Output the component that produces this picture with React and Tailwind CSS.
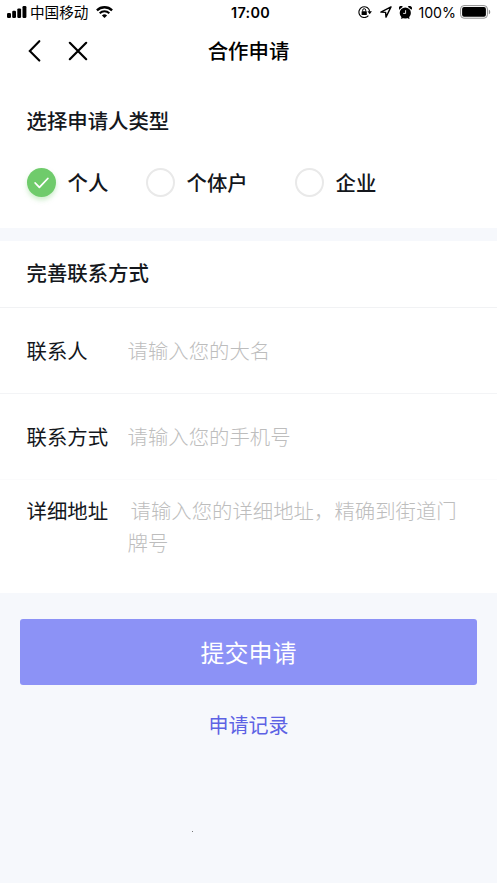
import { useState } from 'react';

const TYPES = [
  { id: 'person', label: '个人', width: 'w-[119px]' },
  { id: 'household', label: '个体户', width: 'w-[149px]' },
  { id: 'company', label: '企业', width: 'w-[100px]' },
];

function SignalIcon() {
  return (
    <svg width="20" height="12" viewBox="0 0 20 12" fill="#000">
      <rect x="0" y="7" width="4" height="5" rx="1.2" />
      <rect x="5.2" y="4.8" width="3.8" height="7.2" rx="1.2" />
      <rect x="10.3" y="2.4" width="3.8" height="9.6" rx="1.2" />
      <rect x="15.5" y="0" width="3.9" height="12" rx="1.2" />
    </svg>
  );
}

function WifiIcon() {
  return (
    <svg width="17" height="12" viewBox="0 0 17 12" fill="none" stroke="#000">
      <path d="M.9 4.3a11 11 0 0 1 15.2 0" strokeWidth="2.3" />
      <path d="M3.7 7.2a7 7 0 0 1 9.6 0" strokeWidth="2.1" />
      <path d="M8.5 12 5.9 9.4a3.8 3.8 0 0 1 5.2 0z" fill="#000" stroke="none" />
    </svg>
  );
}

function LockRotationIcon() {
  return (
    <svg width="14" height="12" viewBox="0 0 14 12" fill="none" stroke="#000">
      <path d="M10.4 9.7A5.4 5.4 0 1 1 11.7 5.6" strokeWidth="1.1" />
      <path d="M9.4 5.3h4.5l-2.2 2.9z" fill="#000" stroke="none" />
      <rect x="3.6" y="5.2" width="5.2" height="3.9" rx=".4" fill="#000" stroke="none" />
      <path d="M4.7 5.5V4.2a1.5 1.5 0 0 1 3 0v1.3" strokeWidth="1" />
    </svg>
  );
}

function LocationIcon() {
  return (
    <svg width="12" height="12" viewBox="0 0 12 12" fill="none" stroke="#000" strokeWidth="1.4" strokeLinejoin="round">
      <path d="M11 .9 .9 6.1l4.7.3.4 4.7z" />
    </svg>
  );
}

function AlarmIcon() {
  return (
    <svg width="13" height="13" viewBox="0 0 13 13">
      <circle cx="6.3" cy="7" r="5.6" />
      <path d="M.2 3.8A2.3 2.3 0 0 1 3.8.8zM12.4 3.8A2.3 2.3 0 0 0 8.8.8zM1.8 12.4l1.2-2 1.4.9-1.2 1.4zM10.8 12.4l-1.2-2-1.4.9 1.2 1.4z" />
      <path d="M6.6 4.2v3.2H4.2" fill="none" stroke="#fff" strokeWidth=".9" />
    </svg>
  );
}

function BatteryIcon() {
  return (
    <svg width="31" height="14" viewBox="0 0 31 14">
      <rect x=".6" y=".6" width="26.8" height="12.6" rx="3.4" fill="none" stroke="#8f8f8f" strokeWidth="1" />
      <rect x="2.1" y="2.1" width="23.8" height="9.6" rx="1.9" />
      <path d="M28.8 4.7c1.9.5 1.9 4 0 4.5z" fill="#8f8f8f" />
    </svg>
  );
}

function StatusBar() {
  return (
    <div className="grid grid-cols-[1fr_auto_1fr] h-6 items-center pl-[7px] pr-[6px]">
      <div className="flex items-center">
        <SignalIcon />
        <span className="ml-[3px] text-[14.6px] leading-6 whitespace-nowrap">中国移动</span>
        <span className="ml-[8px]"><WifiIcon /></span>
      </div>
      <span className="pt-px pl-[3px] font-[Inter] text-[14.4px] leading-[22px] font-semibold tracking-[0.3px]">17:00</span>
      <div className="flex items-center justify-end">
        <LockRotationIcon />
        <span className="ml-[8px]"><LocationIcon /></span>
        <span className="ml-[7px]"><AlarmIcon /></span>
        <span className="ml-[6px] pt-px font-[Inter] text-[14.2px] leading-[22px]">100%</span>
        <span className="ml-[4px]"><BatteryIcon /></span>
      </div>
    </div>
  );
}

function NavBar() {
  return (
    <div className="grid grid-cols-[1fr_auto_1fr] h-[54px] items-center">
      <div className="flex items-center gap-[27px] pl-[28px]">
        <svg width="13" height="22" viewBox="0 0 13 22" fill="none" stroke="#000" strokeWidth="2.1" strokeLinecap="round">
          <path d="M11.3 1.2 1.8 11l9.5 9.6" />
        </svg>
        <svg width="20" height="20" viewBox="0 0 20 20" fill="none" stroke="#000" strokeWidth="2.2" strokeLinecap="round">
          <path d="m1.8 1.8 16.4 16.4M18.2 1.8 1.8 18.2" />
        </svg>
      </div>
      <h1 className="pb-[2px] text-[20.4px] font-medium">合作申请</h1>
    </div>
  );
}

function Radio({ checked }) {
  if (!checked) {
    return <span className="size-[29px] rounded-full border-2 border-[#e9e9e9] bg-white" />;
  }
  return (
    <span className="flex size-[29px] items-center justify-center rounded-full bg-[#6fcb6b] shadow-[0_3px_5px_rgba(111,203,107,0.35)]">
      <svg width="15" height="12" viewBox="0 0 15 12" fill="none" stroke="#fff" strokeWidth="1.8" strokeLinecap="round" strokeLinejoin="round">
        <path d="m1.2 6 4.2 4.4L13.8 1.5" />
      </svg>
    </span>
  );
}

function Field({ label, placeholder, last }) {
  return (
    <label className={`flex h-[86px] items-center border-b pl-[26.5px] ${last ? 'border-[#fbfbfc]' : 'border-[#f3f4f6]'}`}>
      <span className="w-[101px]">{label}</span>
      <input className="flex-1 font-light outline-none placeholder:text-[#bdbdbd]" placeholder={placeholder} />
    </label>
  );
}

export default function App() {
  const [type, setType] = useState('person');

  return (
    <div className="flex h-[883px] w-[497px] flex-col bg-[#f6f8fc] font-['Noto_Sans_CJK_SC',sans-serif] text-[20.4px] text-[#14171c]">
      <header className="bg-white text-black">
        <StatusBar />
        <NavBar />
      </header>

      <section className="h-[150px] bg-white px-[26.5px] pt-[27px]">
        <h2 className="leading-[30px] font-medium">选择申请人类型</h2>
        <div className="mt-[33px] flex">
          {TYPES.map((t) => (
            <button key={t.id} onClick={() => setType(t.id)} className={`flex items-center gap-[12px] font-medium whitespace-nowrap ${t.width}`}>
              <Radio checked={type === t.id} />
              <span className="-mt-px">{t.label}</span>
            </button>
          ))}
        </div>
      </section>

      <section className="mt-[13px] h-[352px] bg-white">
        <h2 className="h-[67px] border-b border-[#f1f2f4] pl-[26.5px] leading-[62px] font-medium">完善联系方式</h2>
        <Field label="联系人" placeholder="请输入您的大名" />
        <Field label="联系方式" placeholder="请输入您的手机号" last />
        <label className="flex pt-[14px] pl-[26.5px] leading-[32px]">
          <span className="w-[101px]">详细地址</span>
          <textarea
            className="h-[70px] w-[340px] resize-none indent-[3px] font-light outline-none placeholder:text-[#bdbdbd]"
            placeholder="请输入您的详细地址，精确到街道门牌号"
          />
        </label>
      </section>

      <button className="mx-[20px] mt-[26px] h-[66px] rounded-[3px] bg-[#8c92f6] text-[24px] text-white">提交申请</button>
      <a className="mt-[25px] text-center text-[20px] leading-[30px] text-[#5d62e4]">申请记录</a>
      <i className="mt-[91px] ml-[192px] size-px bg-[#777]" />
    </div>
  );
}
